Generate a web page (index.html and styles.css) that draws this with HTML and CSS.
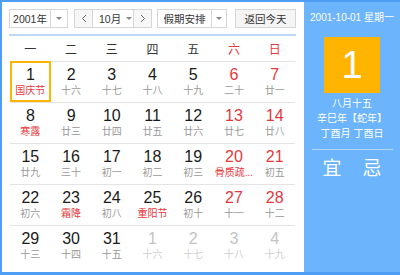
FILE: index.html
```html
<!DOCTYPE html>
<html lang="zh-CN">
<head>
    <meta charset="UTF-8">
    <title>万年历</title>
    <link rel="stylesheet" href="styles.css">
</head>
<body>
    <div class="calendar">
        <div class="main">
            <div class="toolbar">
                <div class="select year">
                    <span class="select-text">2001年</span>
                    <span class="select-arrow"><i class="caret"></i></span>
                </div>
                <div class="select month">
                    <span class="nav-btn"><svg width="6" height="9" viewBox="0 0 6 9"><path d="M5 1 L1.5 4.5 L5 8" fill="none" stroke="#666" stroke-width="1"/></svg></span>
                    <span class="month-text">10月<i class="caret"></i></span>
                    <span class="nav-btn"><svg width="6" height="9" viewBox="0 0 6 9"><path d="M1 1 L4.5 4.5 L1 8" fill="none" stroke="#666" stroke-width="1"/></svg></span>
                </div>
                <div class="select holiday">
                    <span class="select-text">假期安排</span>
                    <span class="select-arrow"><i class="caret"></i></span>
                </div>
                <div class="today-btn">返回今天</div>
            </div>
            <div class="weekdays">
                <span>一</span><span>二</span><span>三</span><span>四</span><span>五</span>
                <span class="red">六</span><span class="red">日</span>
            </div>
            <div class="days">
                <div class="week">
                    <div class="day selected"><b>1</b><small class="fest">国庆节</small></div>
                    <div class="day"><b>2</b><small>十六</small></div>
                    <div class="day"><b>3</b><small>十七</small></div>
                    <div class="day"><b>4</b><small>十八</small></div>
                    <div class="day"><b>5</b><small>十九</small></div>
                    <div class="day weekend"><b>6</b><small>二十</small></div>
                    <div class="day weekend"><b>7</b><small>廿一</small></div>
                </div>
                <div class="week">
                    <div class="day"><b>8</b><small class="fest">寒露</small></div>
                    <div class="day"><b>9</b><small>廿三</small></div>
                    <div class="day"><b>10</b><small>廿四</small></div>
                    <div class="day"><b>11</b><small>廿五</small></div>
                    <div class="day"><b>12</b><small>廿六</small></div>
                    <div class="day weekend"><b>13</b><small>廿七</small></div>
                    <div class="day weekend"><b>14</b><small>廿八</small></div>
                </div>
                <div class="week">
                    <div class="day"><b>15</b><small>廿九</small></div>
                    <div class="day"><b>16</b><small>三十</small></div>
                    <div class="day"><b>17</b><small>初一</small></div>
                    <div class="day"><b>18</b><small>初二</small></div>
                    <div class="day"><b>19</b><small>初三</small></div>
                    <div class="day weekend"><b>20</b><small class="fest">骨质疏...</small></div>
                    <div class="day weekend"><b>21</b><small>初五</small></div>
                </div>
                <div class="week">
                    <div class="day"><b>22</b><small>初六</small></div>
                    <div class="day"><b>23</b><small class="fest">霜降</small></div>
                    <div class="day"><b>24</b><small>初八</small></div>
                    <div class="day"><b>25</b><small class="fest">重阳节</small></div>
                    <div class="day"><b>26</b><small>初十</small></div>
                    <div class="day weekend"><b>27</b><small>十一</small></div>
                    <div class="day weekend"><b>28</b><small>十二</small></div>
                </div>
                <div class="week">
                    <div class="day"><b>29</b><small>十三</small></div>
                    <div class="day"><b>30</b><small>十四</small></div>
                    <div class="day"><b>31</b><small>十五</small></div>
                    <div class="day other"><b>1</b><small>十六</small></div>
                    <div class="day other"><b>2</b><small>十七</small></div>
                    <div class="day other"><b>3</b><small>十八</small></div>
                    <div class="day other"><b>4</b><small>十九</small></div>
                </div>
            </div>
        </div>
        <div class="side">
            <p class="side-date">2001-10-01 星期一</p>
            <div class="big-day">1</div>
            <p class="lunar">八月十五</p>
            <p class="lunar">辛巳年【蛇年】</p>
            <p class="lunar">丁酉月 丁酉日</p>
            <div class="side-line"></div>
            <div class="yiji"><span>宜</span><span>忌</span></div>
        </div>
    </div>
</body>
</html>
```

FILE: styles.css
```css
body {
    margin: 0;
    font-family: "Liberation Sans", "Noto Sans CJK SC", sans-serif;
}
.calendar {
    display: flex;
    width: 400px;
    height: 275px;
    box-sizing: border-box;
    border: 2px solid #4e9ef5;
    border-right: none;
    border-bottom-width: 3px;
    background-color: #6cb4fb;
}
.main {
    width: 302px;
    box-sizing: border-box;
    padding: 7px 8px 0 7px;
    background-color: #fff;
}
.toolbar {
    display: flex;
    height: 19px;
    font-size: 10.5px;
    color: #333;
    white-space: nowrap;
}
.select {
    display: flex;
    box-sizing: border-box;
    height: 19px;
    border: 1px solid #d6d6d6;
    background-color: #fff;
}
.select-text {
    display: flex;
    align-items: center;
    justify-content: center;
    border-right: 1px solid #d6d6d6;
}
.select-arrow {
    display: flex;
    align-items: center;
    justify-content: center;
    flex: 1;
}
.caret {
    display: inline-block;
    width: 0;
    height: 0;
    border-left: 3px solid transparent;
    border-right: 3px solid transparent;
    border-top: 3px solid #888;
}
.year {
    width: 59px;
}
.year .select-text {
    width: 40px;
}
.month {
    width: 78px;
    margin-left: 6px;
}
.nav-btn {
    display: flex;
    align-items: center;
    justify-content: center;
    width: 17px;
    flex-shrink: 0;
    background-color: #f7f7f7;
}
.month-text {
    display: flex;
    align-items: center;
    flex: 1;
    min-width: 0;
    padding-left: 6px;
    border-left: 1px solid #d6d6d6;
    border-right: 1px solid #d6d6d6;
}
.month-text .caret {
    margin-left: 5px;
}
.holiday {
    width: 70px;
    margin-left: 5px;
}
.holiday .select-text {
    width: 53px;
}
.today-btn {
    display: flex;
    align-items: center;
    justify-content: center;
    box-sizing: border-box;
    width: 61px;
    height: 19px;
    margin-left: 8px;
    border: 1px solid #d6d6d6;
    background-color: #f5f5f5;
}
.weekdays {
    display: flex;
    height: 25px;
    margin-top: 6px;
    border-top: 2px solid #bcd9fa;
    padding: 0 1px;
    font-size: 12px;
    color: #333;
}
.weekdays span {
    flex: 1;
    display: flex;
    align-items: center;
    justify-content: center;
}
.red {
    color: #e5383d;
}
.days {
    padding: 0 1px;
}
.week {
    display: flex;
    border-top: 1px solid #e4e4e4;
}
.day {
    flex: 1;
    height: 40px;
    box-sizing: border-box;
    padding-top: 4px;
    text-align: center;
}
.day b {
    display: block;
    font-weight: normal;
    font-size: 16px;
    line-height: 18px;
    color: #1a1a1a;
}
.day small {
    display: block;
    font-size: 10px;
    line-height: 13px;
    color: #999;
}
.day.weekend b {
    color: #e5383d;
}
.day small.fest {
    color: #e5383d;
}
.day.other b {
    color: #c4c4c4;
}
.day.other small {
    color: #cfcfcf;
}
.day.selected {
    box-shadow: inset 0 0 0 2px #ffb400;
    margin-top: -1px;
    height: 41px;
    padding-top: 5px;
}
.side {
    flex: 1;
    color: #fff;
    text-align: center;
}
.side p {
    margin: 0;
}
.side-date {
    margin-top: 8px !important;
    font-size: 10px;
    line-height: 16px;
}
.big-day {
    width: 56px;
    height: 56px;
    margin: 11px auto 0;
    background-color: #ffb400;
    font-size: 38px;
    line-height: 56px;
}
.lunar {
    font-size: 10px;
    line-height: 15px;
}
.big-day + .lunar {
    margin-top: 3px;
}
.side-line {
    height: 1px;
    margin: 8px 7px 0 8px;
    background-color: rgba(255, 255, 255, 0.45);
}
.yiji {
    display: flex;
    justify-content: center;
    margin-top: 7px;
    font-size: 19px;
    line-height: 24px;
}
.yiji span {
    width: 40px;
}
```
